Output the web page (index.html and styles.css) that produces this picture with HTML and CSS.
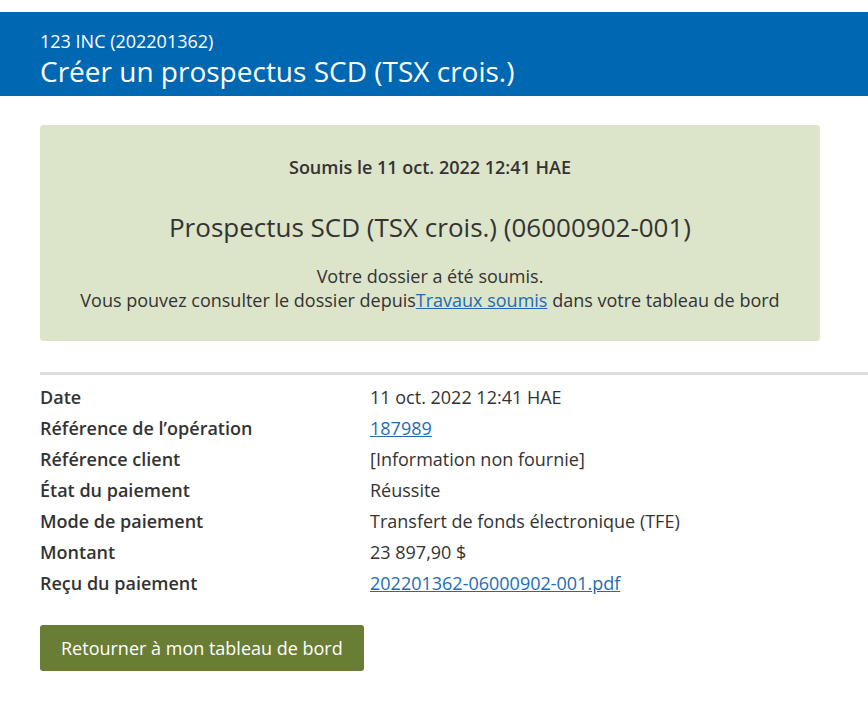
FILE: index.html
```
<!DOCTYPE html>
<html lang="fr">
<head>
  <meta charset="utf-8">
  <link rel="stylesheet" href="styles.css">
</head>
<body>
<div class="banner">
  <div class="company">123 INC (202201362)</div>
  <h1>Créer un prospectus SCD (TSX crois.)</h1>
</div>
<div class="main">
  <div class="notice">
    <p class="submitted">Soumis le 11 oct. 2022 12:41 HAE</p>
    <h2>Prospectus SCD (TSX crois.) (06000902-001)</h2>
    <p class="msg">Votre dossier a été soumis.<br>Vous pouvez consulter le dossier depuis<a href="#">Travaux soumis</a> dans votre tableau de bord</p>
  </div>
  <hr class="divider">
  <dl class="details">
    <dt>Date</dt><dd>11 oct. 2022 12:41 HAE</dd>
    <dt>Référence de l’opération</dt><dd><a href="#">187989</a></dd>
    <dt>Référence client</dt><dd>[Information non fournie]</dd>
    <dt>État du paiement</dt><dd>Réussite</dd>
    <dt>Mode de paiement</dt><dd>Transfert de fonds électronique (TFE)</dd>
    <dt>Montant</dt><dd>23 897,90 $</dd>
    <dt>Reçu du paiement</dt><dd><a href="#">202201362-06000902-001.pdf</a></dd>
  </dl>
  <button class="btn">Retourner à mon tableau de bord</button>
</div>
</body>
</html>
```

FILE: styles.css
```
body {
  margin: 0;
  font-family: "Open Sans", "Noto Sans", sans-serif;
  font-size: 18px;
  color: #333;
  overflow-x: hidden;
}

a {
  color: #1f6cb0;
}

.banner {
  margin-top: 12px;
  background-color: #0067b2;
  color: #fff;
  padding: 18px 40px 6px;
}

.company {
  font-size: 18px;
  line-height: 22px;
}

.banner h1 {
  margin: 0;
  font-size: 28px;
  font-weight: 400;
  line-height: 38px;
}

.main {
  padding: 29px 0 0 40px;
}

.notice {
  width: 780px;
  box-sizing: border-box;
  background-color: #dce4c9;
  border-radius: 4px;
  text-align: center;
  padding: 30px 10px 29px;
}

.submitted {
  margin: 0;
  font-weight: 600;
  line-height: 24px;
}

.notice h2 {
  margin: 31px 0 20px;
  font-size: 26px;
  font-weight: 400;
  line-height: 34px;
}

.msg {
  margin: 0;
  line-height: 24px;
}

.divider {
  border: 0;
  height: 3px;
  background-color: #dddddd;
  margin: 31px 0 10px;
}

.details {
  display: grid;
  grid-template-columns: 330px 1fr;
  row-gap: 7px;
  margin: 0;
}

.details dt {
  font-weight: 600;
  line-height: 24px;
}

.details dd {
  margin: 0;
  line-height: 24px;
}

.btn {
  margin-top: 30px;
  border: none;
  border-radius: 3px;
  background-color: #697e34;
  color: #fff;
  font-family: inherit;
  font-size: 18px;
  padding: 11px 21px;
  line-height: 24px;
  cursor: pointer;
}
```
